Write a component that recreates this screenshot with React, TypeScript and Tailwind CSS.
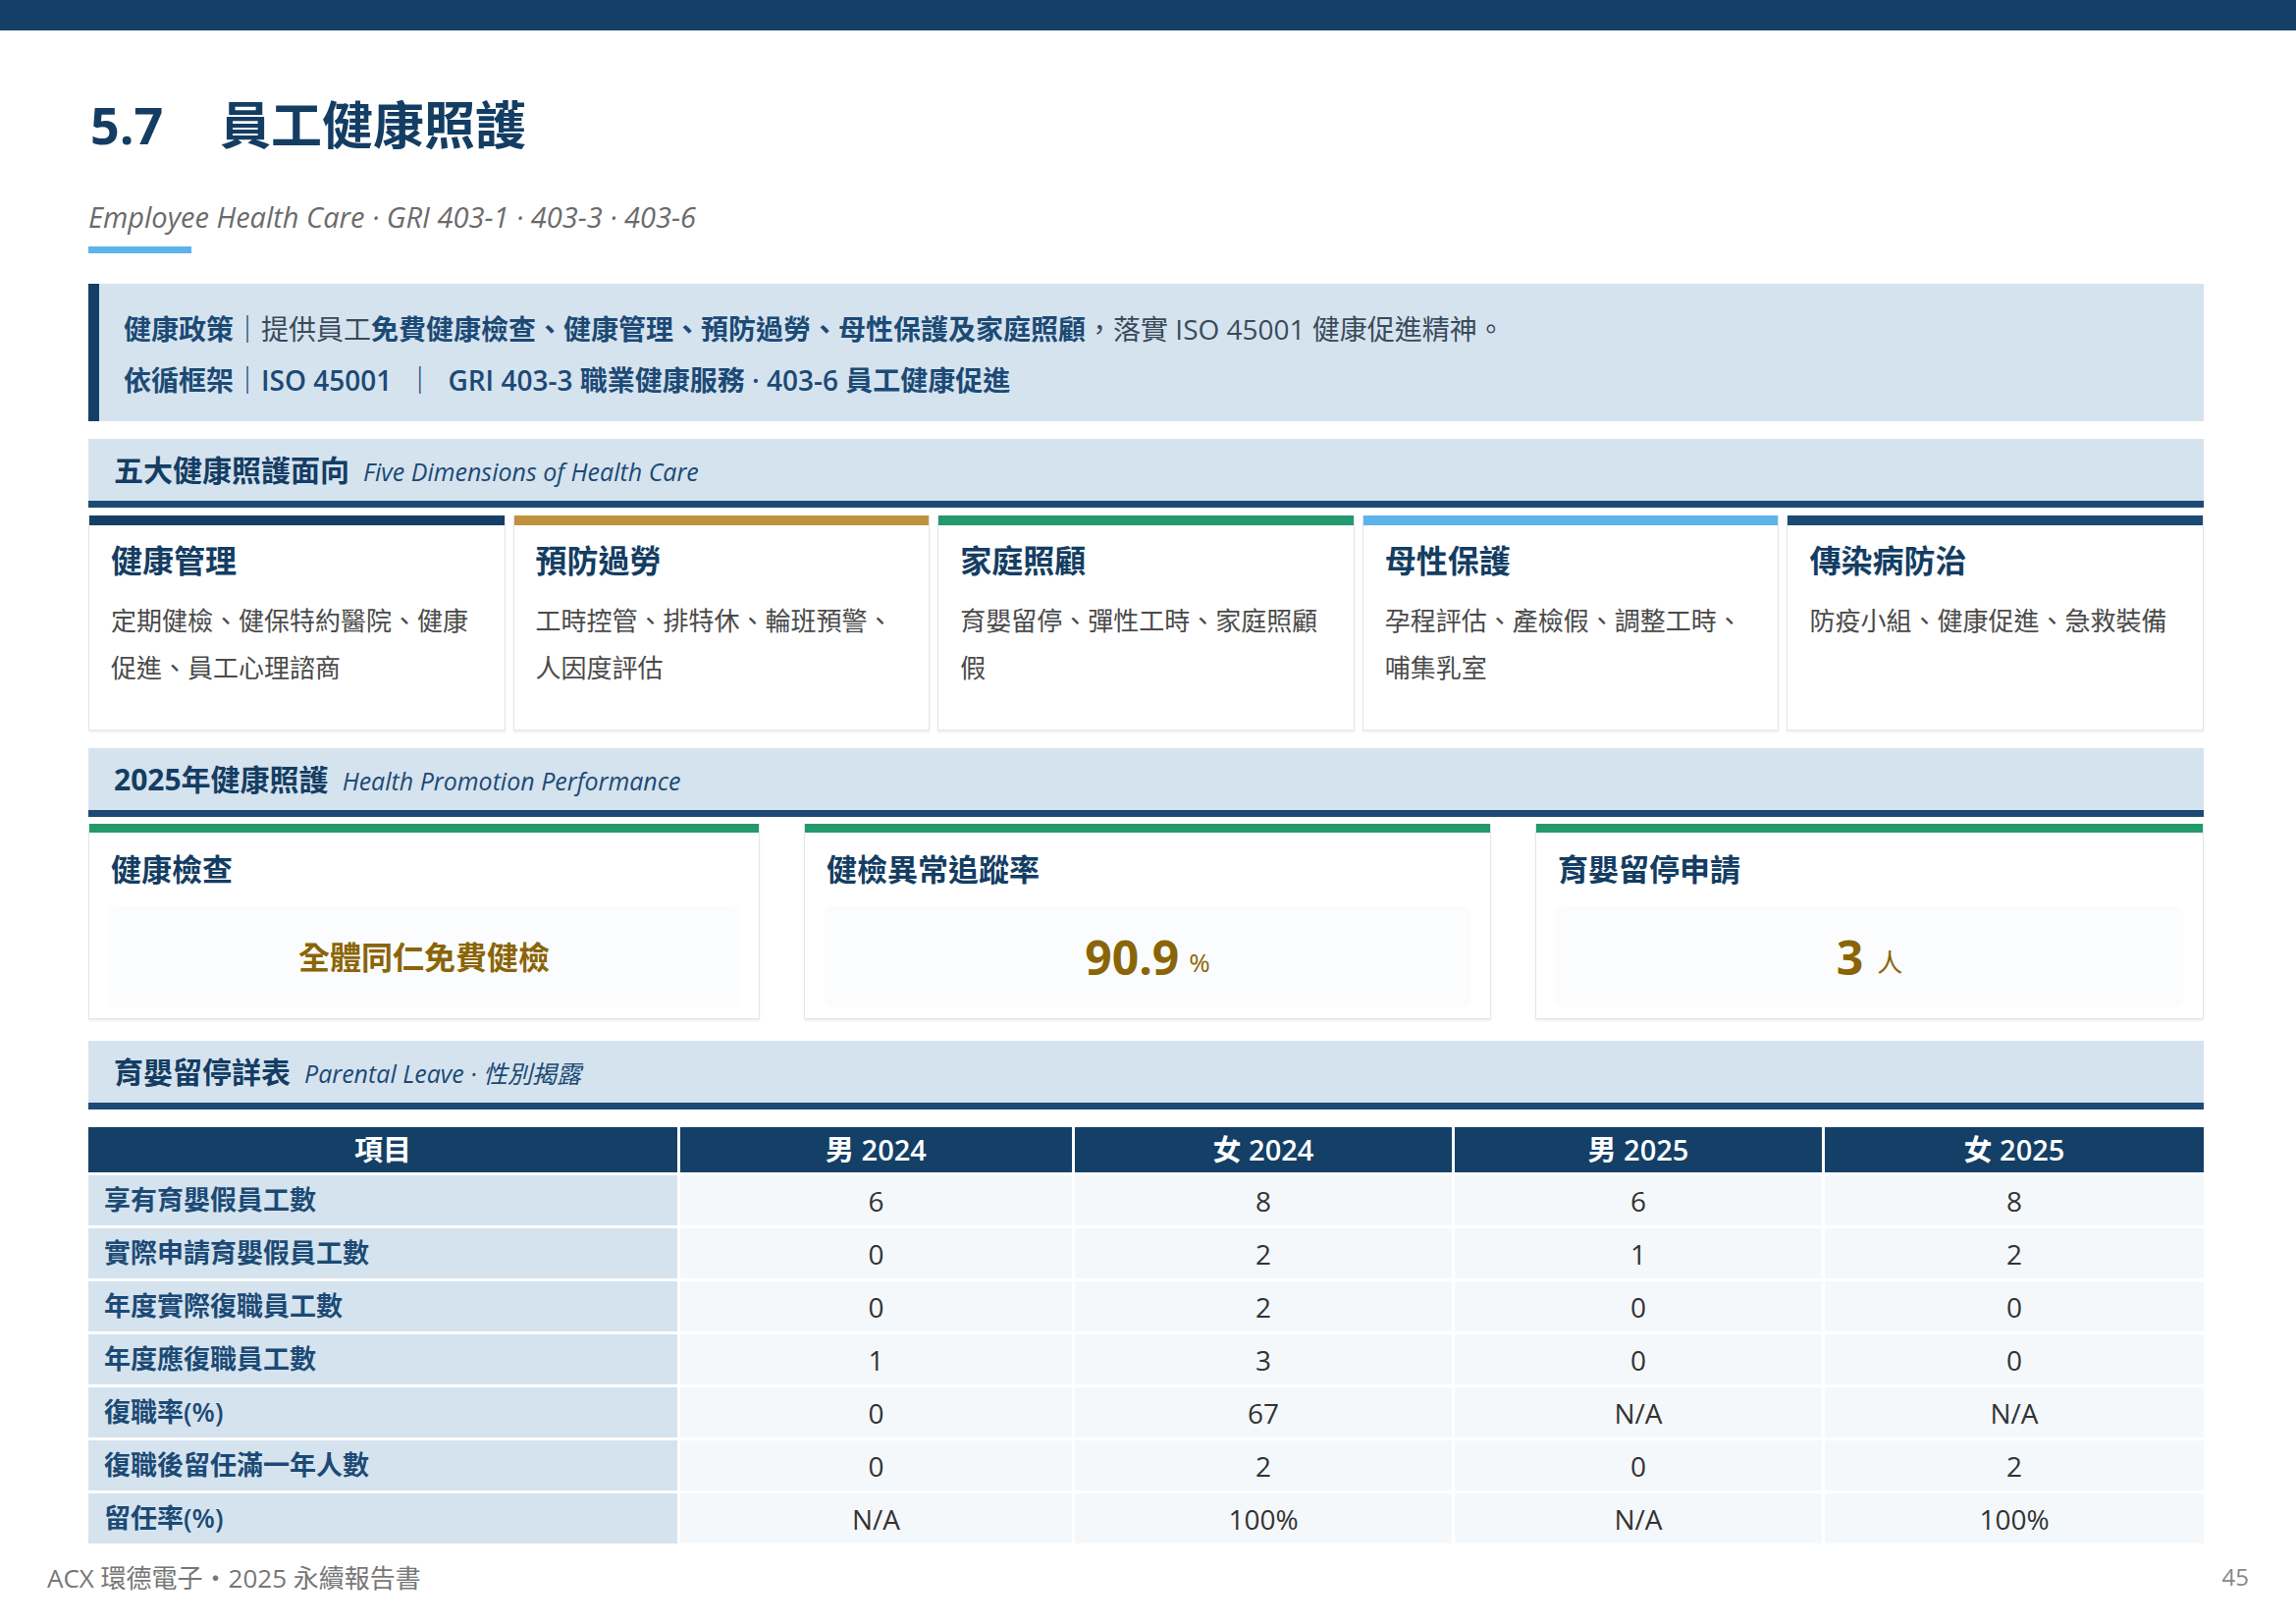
import React from "react";

const F = { fontFamily: "'Open Sans','Noto Sans CJK TC',sans-serif" };

function SectionHead({ zh, en }: { zh: string; en: React.ReactNode }) {
  return (
    <div className="h-[70px] bg-[#d5e3ef] border-b-[7px] border-[#1c4a75] flex items-center pl-[26px] gap-[14px]">
      <span className="text-[30px] font-bold text-[#143d63]">{zh}</span>
      <span className="text-[25px] italic text-[#1c4a75] mt-[4px]">{en}</span>
    </div>
  );
}

const dims = [
  { t: "健康管理", c: "bg-[#143f66]", d: "定期健檢、健保特約醫院、健康促進、員工心理諮商" },
  { t: "預防過勞", c: "bg-[#c0913f]", d: "工時控管、排特休、輪班預警、人因度評估" },
  { t: "家庭照顧", c: "bg-[#24996e]", d: "育嬰留停、彈性工時、家庭照顧假" },
  { t: "母性保護", c: "bg-[#5cb4ea]", d: "孕程評估、產檢假、調整工時、哺集乳室" },
  { t: "傳染病防治", c: "bg-[#1c4a75]", d: "防疫小組、健康促進、急救裝備" },
];

const rows = [
  ["享有育嬰假員工數", "6", "8", "6", "8"],
  ["實際申請育嬰假員工數", "0", "2", "1", "2"],
  ["年度實際復職員工數", "0", "2", "0", "0"],
  ["年度應復職員工數", "1", "3", "0", "0"],
  ["復職率(%)", "0", "67", "N/A", "N/A"],
  ["復職後留任滿一年人數", "0", "2", "0", "2"],
  ["留任率(%)", "N/A", "100%", "N/A", "100%"],
];

export default function App() {
  return (
    <div style={F} className="w-[2339px] h-[1654px] bg-white relative overflow-hidden">
      <div className="h-[31px] bg-[#143f66]" />
      <div className="ml-[90px] w-[2155px]">
        <div className="mt-[61px] h-[70px] flex items-center text-[52px] font-bold text-[#143d63]">
          <span className="w-[134px] pl-[2px]">5.7</span>
          <span>員工健康照護</span>
        </div>
        <div className="mt-[39px] h-[40px] flex items-center text-[29px] italic text-[#6b6b6b]">
          Employee Health Care · GRI 403-1 · 403-3 · 403-6
        </div>
        <div className="mt-[10px] h-[7px] w-[105px] bg-[#5cb4ea]" />
        <div className="mt-[31px] h-[140px] bg-[#d5e3ef] border-l-[11px] border-[#143f66] pl-[25px] pt-[20px] text-[28px] text-[#1c4a75]">
          <div className="h-[52px] flex items-center whitespace-pre">
            <span className="font-semibold">健康政策｜</span>
            <span className="text-[#3a4a5a]">提供員工</span>
            <span className="font-semibold">免費健康檢查、健康管理、預防過勞、母性保護及家庭照顧</span>
            <span className="text-[#3a4a5a]">，落實 ISO 45001 健康促進精神。</span>
          </div>
          <div className="h-[52px] flex items-center whitespace-pre font-semibold">
            依循框架｜ISO 45001  ｜  GRI 403-3 職業健康服務 · 403-6 員工健康促進
          </div>
        </div>

        <div className="mt-[18px]">
          <SectionHead zh="五大健康照護面向" en="Five Dimensions of Health Care" />
        </div>
        <div className="mt-[8px] grid grid-cols-5 gap-[8px] h-[219px]">
          {dims.map((d) => (
            <div key={d.t} className="border border-[#e3e6ea] border-t-0 flex flex-col shadow-[0_2px_2px_rgba(0,0,0,0.06)]">
              <div className={`h-[10px] ${d.c}`} />
              <div className="px-[22px]">
                <div className="mt-[12px] h-[48px] flex items-center text-[32px] font-bold text-[#143d63]">{d.t}</div>
                <div className="mt-[13px] text-[26px] leading-[48px] text-[#4a4a4a]">{d.d}</div>
              </div>
            </div>
          ))}
        </div>

        <div className="mt-[18px]">
          <SectionHead zh="2025年健康照護" en="Health Promotion Performance" />
        </div>
        <div className="mt-[7px] flex gap-[45px] h-[199px]">
          {[
            { t: "健康檢查", v: <span className="text-[32px] font-bold">全體同仁免費健檢</span>, w: "w-[684px]" },
            { t: "健檢異常追蹤率", v: <><span className="text-[48px] font-bold">90.9</span><span className="text-[26px] ml-[10px] mt-[12px]">%</span></>, w: "w-[700px]" },
            { t: "育嬰留停申請", v: <><span className="text-[48px] font-bold">3</span><span className="text-[26px] ml-[14px] mt-[12px]">人</span></>, w: "flex-1" },
          ].map((k) => (
            <div key={k.t} className={`${k.w} border border-[#e3e6ea] border-t-0 flex flex-col shadow-[0_2px_2px_rgba(0,0,0,0.06)]`}>
              <div className="h-[9px] bg-[#24996e]" />
              <div className="px-[22px]">
                <div className="mt-[14px] h-[46px] flex items-center text-[31px] font-bold text-[#143d63]">{k.t}</div>
                <div className="mt-[18px] h-[97px] bg-[#fbfcfd] shadow-[0_0_6px_rgba(0,0,0,0.04)] flex items-center justify-center text-[#8a6508]">
                  {k.v}
                </div>
              </div>
            </div>
          ))}
        </div>

        <div className="mt-[22px]">
          <SectionHead zh="育嬰留停詳表" en={<>Parental Leave · 性別揭露</>} />
        </div>
        <div className="mt-[18px] grid grid-cols-[600px_399px_384px_374px_1fr] gap-x-[3px] gap-y-[3px]">
          {["項目", "男 2024", "女 2024", "男 2025", "女 2025"].map((h) => (
            <div key={h} className="h-[46px] bg-[#143f66] text-white text-[29px] font-semibold flex items-center justify-center">{h}</div>
          ))}
          {rows.map((r) =>
            r.map((c, i) =>
              i === 0 ? (
                <div key={r[0] + i} className="h-[51px] bg-[#d5e3ef] text-[#1c4a75] font-semibold text-[27px] flex items-center pl-[16px]">{c}</div>
              ) : (
                <div key={r[0] + i} className="h-[51px] bg-[#f5f8fb] text-[#333] text-[28px] flex items-center justify-center">{c}</div>
              )
            )
          )}
        </div>
      </div>
      <div className="absolute left-[48px] top-[1588px] text-[26px] text-[#777]">ACX 環德電子・2025 永續報告書</div>
      <div className="absolute right-[48px] top-[1588px] text-[24px] text-[#888]">45</div>
    </div>
  );
}
